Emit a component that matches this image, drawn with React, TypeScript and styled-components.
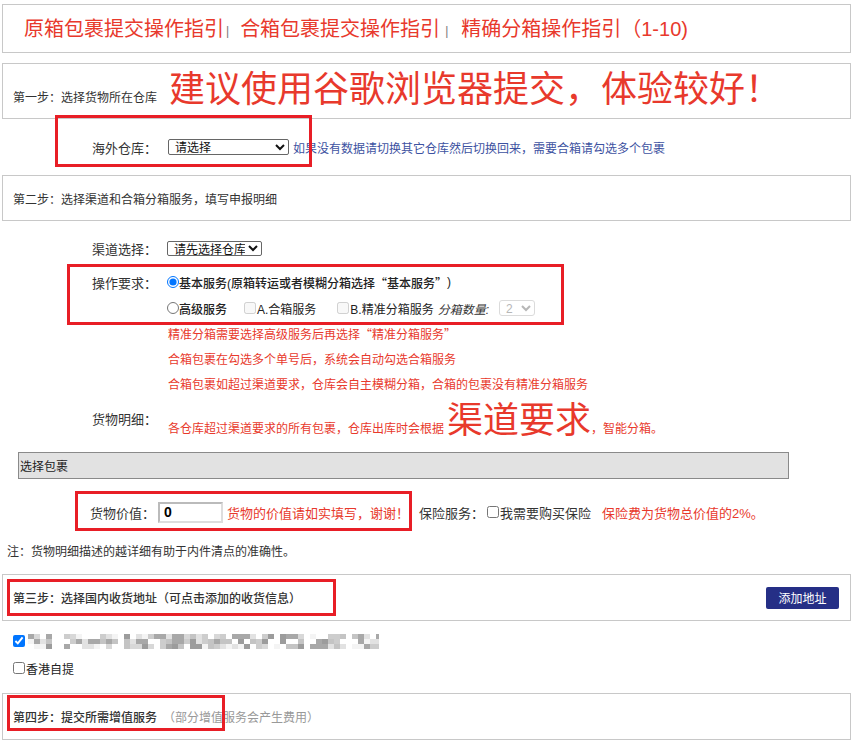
import React from 'react';
import styled, { createGlobalStyle } from 'styled-components';

const RED = '#e8392c';
const MARK = '#e81e26';

const GlobalStyle = createGlobalStyle`
  html, body { margin: 0; padding: 0; background: #fff; }
  body {
    font-family: "Liberation Sans", "Noto Sans CJK SC", sans-serif;
    color: #333;
  }
`;

const Page = styled.div`
  width: 849px;
  margin-left: 2px;
  padding-top: 4px;
`;

const Panel = styled.div<{ $h: number; $mt?: number; $pt?: number; $align?: string }>`
  position: relative;
  box-sizing: border-box;
  height: ${p => p.$h}px;
  margin-top: ${p => p.$mt ?? 0}px;
  padding: ${p => p.$pt ?? 0}px 11px 0 10px;
  border: 1px solid #c8c8c8;
  display: flex;
  align-items: ${p => p.$align ?? 'center'};
`;

const GuideLink = styled.a`
  color: ${RED};
  font-size: 20px;
  line-height: 24px;
  text-decoration: none;
`;

const Sep = styled.span<{ $l: number; $r: number }>`
  color: #777;
  font-size: 12px;
  margin: 4px ${p => p.$r}px 0 ${p => p.$l}px;
`;

const StepLabel = styled.span<{ $bold?: boolean }>`
  font-size: 12px;
  color: #333;
  font-weight: ${p => (p.$bold ? 500 : 400)};
  white-space: nowrap;
`;

const StepNote = styled.span`
  font-size: 12px;
  color: #999;
  margin-left: 6px;
`;

const BigRed = styled.span<{ $ml?: number }>`
  color: ${RED};
  font-size: 36px;
  line-height: 40px;
  margin-left: ${p => p.$ml ?? 0}px;
`;

const Cjk = styled.span`
  font-family: "Noto Sans CJK SC", sans-serif;
`;

const Highlight = styled.div<{ $l: number; $t: number; $w: number; $h: number }>`
  position: absolute;
  left: ${p => p.$l}px;
  top: ${p => p.$t}px;
  width: ${p => p.$w}px;
  height: ${p => p.$h}px;
  box-sizing: border-box;
  border: 3px solid ${MARK};
  pointer-events: none;
`;

const FieldRow = styled.div<{ $h: number; $mt?: number; $pl?: number }>`
  position: relative;
  display: flex;
  align-items: center;
  height: ${p => p.$h}px;
  margin-top: ${p => p.$mt ?? 0}px;
  padding-left: ${p => p.$pl ?? 90}px;
  font-size: 12px;
`;

const Label = styled.span<{ $w: number }>`
  width: ${p => p.$w}px;
  flex: none;
  font-size: 13px;
  color: #333;
`;

const Select = styled.select<{ $w: number; $h: number }>`
  width: ${p => p.$w}px;
  height: ${p => p.$h}px;
  font-size: 12px;
  font-family: "Liberation Sans", "Noto Sans CJK SC", sans-serif;
  padding: 0 0 0 2px;
  margin: 0;
  color: #111;
  background: #fff;
  border: 1px solid #666;
  border-radius: 2px;
`;

const SmallSelect = styled(Select)`
  border-color: #ccc;
  color: #999;
  border-radius: 3px;
`;

const Hint = styled.span`
  color: #3d52a1;
  font-size: 12px;
  margin-left: 4px;
`;

const OpBlock = styled.div`
  position: relative;
  margin-top: 8px;
`;

const Choice = styled.label<{ $ml?: number; $strong?: boolean }>`
  display: inline-flex;
  align-items: center;
  margin-left: ${p => p.$ml ?? 0}px;
  font-size: 12px;
  color: #222;
  font-weight: ${p => (p.$strong ? 500 : 400)};
  white-space: nowrap;
`;

const Radio = styled.input`
  width: 12px;
  height: 12px;
  margin: 0;
`;

const Check = styled.input`
  width: 12px;
  height: 12px;
  margin: 0 1px 0 0;
`;

const Italic = styled.i`
  margin: 0 10px 0 4px;
  color: #333;
  font-weight: 400;
`;

const RedLine = styled.div`
  height: 25px;
  display: flex;
  align-items: center;
  padding-left: 166px;
  color: ${RED};
  font-size: 12px;
`;

const DetailRow = styled.div`
  display: flex;
  align-items: flex-start;
  height: 56px;
  padding-left: 90px;
`;

const DetailLabel = styled(Label)`
  margin-top: 15px;
  line-height: 18px;
`;

const DetailText = styled.div`
  display: flex;
  align-items: baseline;
  color: ${RED};
  font-size: 12px;
  margin-top: 5px;
`;

const GreyBar = styled.div`
  box-sizing: border-box;
  width: 771px;
  height: 27px;
  margin-left: 16px;
  background: #e2e2e2;
  border: 1px solid #8a8a8a;
  display: flex;
  align-items: center;
  padding-left: 1px;
  font-size: 12px;
  color: #222;
`;

const ValueInput = styled.input`
  box-sizing: border-box;
  width: 65px;
  height: 21px;
  border: 2px solid;
  border-color: #bbb #ddd #ddd #bbb;
  padding: 0 4px;
  font-size: 14px;
  font-weight: 700;
  font-family: "Liberation Sans", sans-serif;
  color: #000;
`;

const RedText = styled.span<{ $ml?: number }>`
  color: ${RED};
  font-size: 13px;
  margin-left: ${p => p.$ml ?? 0}px;
`;

const PlainText = styled.span<{ $ml?: number }>`
  font-size: 13px;
  color: #333;
  margin-left: ${p => p.$ml ?? 0}px;
`;

const NoteRow = styled.div`
  margin-top: 9px;
  height: 20px;
  display: flex;
  align-items: center;
  padding-left: 5px;
  font-size: 12px;
  color: #333;
`;

const AddButton = styled.button`
  margin-left: auto;
  width: 73px;
  height: 22px;
  border: none;
  border-radius: 2px;
  background: #252f86;
  color: #fff;
  font-size: 12px;
  font-family: "Liberation Sans", "Noto Sans CJK SC", sans-serif;
  padding: 0;
`;

const AddrRow = styled.div<{ $h: number; $mt: number }>`
  display: flex;
  align-items: center;
  height: ${p => p.$h}px;
  margin-top: ${p => p.$mt}px;
  padding-left: 11px;
  font-size: 12px;
  color: #222;
`;

const Mosaic: React.FC = () => {
  const shades = ['#ececec', '#d8d8d8', '#c4c4c4', '#a8a8a8', '#f4f4f4', '#cdcdcd', '#9c9c9c', '#e2e2e2'];
  const cells: React.ReactNode[] = [];
  let seed = 7;
  const rnd = () => {
    seed = (seed * 9301 + 49297) % 233280;
    return seed / 233280;
  };
  for (let x = 0; x < 350; x += 6) {
    const gap = (x > 20 && x < 32) || (x > 84 && x < 94);
    for (let y = 0; y < 15; y += 5) {
      if (gap) continue;
      const r = rnd();
      if (r < 0.2) continue;
      cells.push(
        <rect key={`${x}-${y}`} x={x} y={y} width={6} height={5} fill={shades[Math.floor(r * shades.length) % shades.length]} />
      );
    }
  }
  return (
    <svg width="351" height="15" viewBox="0 0 351 15" style={{ display: 'block', marginLeft: 2 }}>
      {cells}
    </svg>
  );
};

export default function App() {
  return (
    <>
      <GlobalStyle />
      <Page>
        <Panel $h={49} style={{ paddingLeft: 21 }}>
          <GuideLink href="#">原箱包裹提交操作指引</GuideLink>
          <Sep $l={2} $r={11}>|</Sep>
          <GuideLink href="#">合箱包裹提交操作指引</GuideLink>
          <Sep $l={5} $r={13}>|</Sep>
          <GuideLink href="#">精确分箱操作指引（1-10)</GuideLink>
        </Panel>

        <Panel $h={56} $mt={10} $align="baseline" $pt={6}>
          <StepLabel>第一步：选择货物所在仓库</StepLabel>
          <BigRed $ml={12}>建议使用谷歌浏览器提交，体验较好！</BigRed>
        </Panel>

        <FieldRow $h={56}>
          <Highlight $l={53} $t={-4} $w={257} $h={52} />
          <Label $w={76}>海外仓库：</Label>
          <Select $w={121} $h={16} defaultValue="0">
            <option value="0">请选择</option>
          </Select>
          <Hint>如果没有数据请切换其它仓库然后切换回来，需要合箱请勾选多个包裹</Hint>
        </FieldRow>

        <Panel $h={46}>
          <StepLabel>第二步：选择渠道和合箱分箱服务，填写申报明细</StepLabel>
        </Panel>

        <FieldRow $h={26} $mt={14}>
          <Label $w={75}>渠道选择：</Label>
          <Select $w={95} $h={15} defaultValue="0">
            <option value="0">请先选择仓库</option>
          </Select>
        </FieldRow>

        <OpBlock>
          <Highlight $l={65} $t={-5} $w={497} $h={61} />
          <FieldRow $h={26}>
            <Label $w={75}>操作要求：</Label>
            <Choice $strong>
              <Radio type="radio" name="svc" defaultChecked />
              基本服务(原箱转运或者模糊分箱选择<Cjk>“</Cjk>基本服务<Cjk>”</Cjk>)
            </Choice>
          </FieldRow>
          <FieldRow $h={26} $pl={165}>
            <Choice $strong>
              <Radio type="radio" name="svc" />
              高级服务
            </Choice>
            <Choice $ml={17}>
              <Check type="checkbox" disabled />
              A.合箱服务
            </Choice>
            <Choice $ml={21}>
              <Check type="checkbox" disabled />
              B.精准分箱服务
              <Italic>分箱数量:</Italic>
              <SmallSelect $w={36} $h={16} disabled defaultValue="2">
                <option value="2">2</option>
              </SmallSelect>
            </Choice>
          </FieldRow>
        </OpBlock>

        <RedLine>
          精准分箱需要选择高级服务后再选择<Cjk>“</Cjk>精准分箱服务<Cjk>”</Cjk>
        </RedLine>
        <RedLine>合箱包裹在勾选多个单号后，系统会自动勾选合箱服务</RedLine>
        <RedLine>合箱包裹如超过渠道要求，仓库会自主模糊分箱，合箱的包裹没有精准分箱服务</RedLine>

        <DetailRow>
          <DetailLabel $w={76}>货物明细：</DetailLabel>
          <DetailText>
            各仓库超过渠道要求的所有包裹，仓库出库时会根据
            <BigRed $ml={3}>渠道要求</BigRed>
            ，智能分箱。
          </DetailText>
        </DetailRow>

        <GreyBar>选择包裹</GreyBar>

        <FieldRow $h={38} $mt={14} $pl={88}>
          <Highlight $l={73} $t={-2} $w={337} $h={40} />
          <Label $w={68}>货物价值：</Label>
          <ValueInput defaultValue="0" />
          <RedText $ml={4}>货物的价值请如实填写，谢谢！</RedText>
          <PlainText $ml={10}>保险服务：</PlainText>
          <Choice $ml={3}>
            <Check type="checkbox" />
            <PlainText>我需要购买保险</PlainText>
          </Choice>
          <RedText $ml={11}>保险费为货物总价值的2%。</RedText>
        </FieldRow>

        <NoteRow>注：货物明细描述的越详细有助于内件清点的准确性。</NoteRow>

        <Panel $h={47} $mt={14}>
          <Highlight $l={4} $t={4} $w={329} $h={37} />
          <StepLabel $bold>第三步：选择国内收货地址（可点击添加的收货信息）</StepLabel>
          <AddButton type="button">添加地址</AddButton>
        </Panel>

        <AddrRow $h={14} $mt={13}>
          <Check type="checkbox" defaultChecked />
          <Mosaic />
        </AddrRow>
        <AddrRow $h={18} $mt={11}>
          <Check type="checkbox" />
          香港自提
        </AddrRow>

        <Panel $h={47} $mt={16}>
          <Highlight $l={4} $t={1} $w={218} $h={36} />
          <StepLabel $bold>第四步：提交所需增值服务</StepLabel>
          <StepNote>（部分增值服务会产生费用）</StepNote>
        </Panel>
      </Page>
    </>
  );
}
